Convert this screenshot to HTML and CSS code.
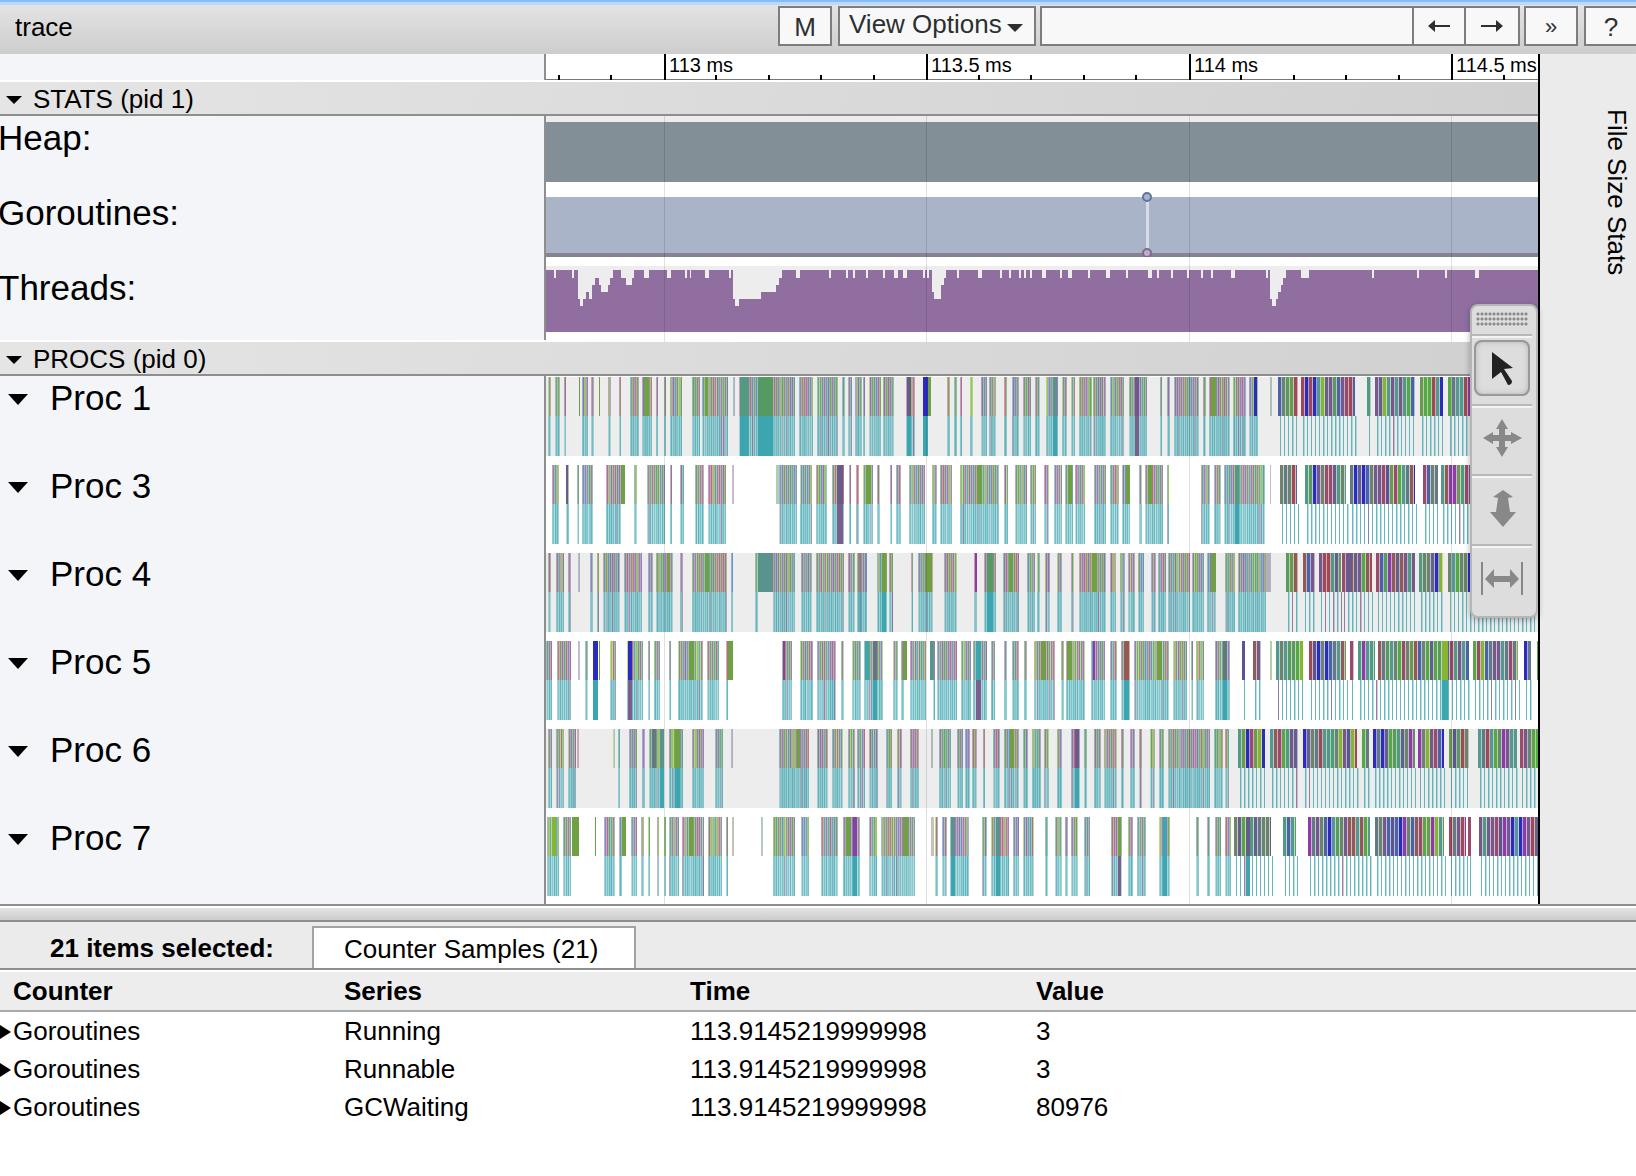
FILE: index.html
```html
<!DOCTYPE html>
<html lang="en">
<head>
<meta charset="utf-8">
<title>trace</title>
<link rel="stylesheet" href="styles.css">
</head>
<body>
<header class="toolbar">
  <h1 class="title">trace</h1>
  <button class="tool-btn" type="button">M</button>
  <button class="tool-btn options-btn" type="button">View Options<svg class="caret" width="16" height="8" viewBox="0 0 16 8" aria-hidden="true"><path d="M0 0H16L8 8Z"/></svg></button>
  <div class="find">
    <input class="find-input" type="text" aria-label="Find">
    <button class="find-btn" type="button" aria-label="Previous"><svg width="22" height="14" viewBox="0 0 22 14"><path d="M0 7L7 1V6H22V8H7V13Z"/></svg></button>
    <button class="find-btn" type="button" aria-label="Next"><svg width="22" height="14" viewBox="0 0 22 14"><path d="M22 7L15 1V6H0V8H15V13Z"/></svg></button>
  </div>
  <button class="tool-btn more-btn" type="button">»</button>
  <button class="tool-btn help-btn" type="button">?</button>
</header>

<main class="workspace">
  <section class="timeline">
    <div class="ruler">
      <div class="heading"></div>
      <svg class="scale" id="scale"></svg>
    </div>

    <h2 class="group"><svg class="caret" width="16" height="8" viewBox="0 0 16 8" aria-hidden="true"><path d="M0 0H16L8 8Z"/></svg>STATS (pid 1)</h2>
    <div class="track counter">
      <div class="heading"><span class="counter-name">Heap:</span></div>
      <svg class="lane shaded"><rect y="6" width="100%" height="60" fill="#828f96"/></svg>
    </div>
    <div class="track counter">
      <div class="heading"><span class="counter-name">Goroutines:</span></div>
      <svg class="lane">
        <rect y="6" width="100%" height="56" fill="#aab4c9"/>
        <rect y="62" width="100%" height="4" fill="#84838f"/>
        <rect x="600" y="10" width="3" height="49" fill="#d7dce8"/>
        <circle cx="601" cy="6" r="4" fill="#aab4c9" stroke="#5d74a0" stroke-width="2"/>
        <circle cx="601" cy="62" r="4" fill="#c0adc4" stroke="#84678f" stroke-width="2"/>
      </svg>
    </div>
    <div class="track counter last">
      <div class="heading"><span class="counter-name">Threads:</span></div>
      <svg class="lane shaded" id="threads"><rect y="4" width="100%" height="62" fill="#906fa0"/></svg>
    </div>

    <h2 class="group"><svg class="caret" width="16" height="8" viewBox="0 0 16 8" aria-hidden="true"><path d="M0 0H16L8 8Z"/></svg>PROCS (pid 0)</h2>
    <div id="procs"></div>

    <svg class="gridlines" id="gridlines" aria-hidden="true"></svg>

    <div class="palette">
      <div class="grip"></div>
      <button class="mode" type="button" aria-label="Select" aria-pressed="true"><svg width="56" height="56" viewBox="0 0 56 56"><path fill="#222" d="M18 12L39 28L30 29L38 41Q38 45 34 45L27 32L18 39Z"/></svg></button>
      <button class="mode" type="button" aria-label="Pan"><svg width="56" height="56" viewBox="0 0 56 56"><path fill="#888" d="M28 9L34 19H31V25H37V22L48 28L37 34V31H31V37H34L28 47L22 37H25V31H19V34L9 28L19 22V25H25V19H22Z"/></svg></button>
      <button class="mode" type="button" aria-label="Zoom"><svg width="56" height="56" viewBox="0 0 56 56"><path fill="#888" d="M29 10L39 17L34 18L36 32H42L29 47L16 32H22L24 18L19 17Z"/></svg></button>
      <button class="mode" type="button" aria-label="Timing"><svg width="56" height="56" viewBox="0 0 56 56"><path fill="#888" d="M7 12H9V45H7ZM47 12H49V45H47ZM11 29L20 19V26H36V19L45 29L36 38V32H20V38Z"/></svg></button>
    </div>
  </section>
  <aside class="side"><button class="side-tab" type="button">File Size Stats</button></aside>
</main>

<div class="drag-handle"></div>

<section class="analysis">
  <div class="tabs">
    <strong class="selected-count">21 items selected:</strong>
    <button class="tab" type="button">Counter Samples (21)</button>
  </div>
  <table class="samples">
    <colgroup><col class="col-counter"><col class="col-mid"><col class="col-mid"><col></colgroup>
    <thead>
      <tr><th>Counter</th><th>Series</th><th>Time</th><th>Value</th></tr>
    </thead>
    <tbody>
      <tr><td class="expand">Goroutines</td><td>Running</td><td>113.9145219999998</td><td>3</td></tr>
      <tr><td class="expand">Goroutines</td><td>Runnable</td><td>113.9145219999998</td><td>3</td></tr>
      <tr><td class="expand">Goroutines</td><td>GCWaiting</td><td>113.9145219999998</td><td>80976</td></tr>
    </tbody>
  </table>
</section>
<script src="trace.js"></script>
</body>
</html>
```

FILE: styles.css
```css
* { box-sizing: border-box; }

body {
  margin: 0;
  background: #fff;
  color: #000;
  font: 26px/32px "Liberation Sans", Arial, sans-serif;
  overflow-x: hidden;
}

button, input { font: inherit; color: inherit; margin: 0; }
h1, h2 { margin: 0; font: inherit; }

/* Toolbar */
.toolbar {
  display: flex;
  align-items: flex-start;
  height: 54px;
  padding-top: 6px;
  background: linear-gradient(#86bcfb 2px, #bcd8fa 2px, #bcd8fa 5px, #e3e3e3 5px, #cdcdcd);
}
.title { flex: 1; padding: 5px 0 0 15px; }
.tool-btn, .find {
  height: 40px;
  border: 2px solid #7d7d7d;
  background: #f8f8f8;
  color: #2c2f30;
}
.tool-btn { width: 54px; padding: 1px 0 0; line-height: 32px; text-align: center; }
.options-btn {
  display: flex;
  width: 198px;
  margin: 0 4px 0 6px;
  padding: 0 0 0 9px;
}
.options-btn .caret { margin: 16px 0 0 5px; fill: #2c2f30; }
.find { display: flex; width: 480px; }
.find-input { flex: 1; min-width: 0; padding: 0 8px; border: 0; background: none; }
.find-btn {
  width: 52px;
  padding: 0;
  border: 0;
  border-left: 2px solid #7d7d7d;
  background: none;
  line-height: 0;
}
.find-btn:last-child { width: 54px; }
.find-btn svg { fill: #2c2f30; }
.more-btn { margin: 0 6px 0 4px; font-size: 22px; }
.help-btn { margin-right: -2px; flex: none; }

/* Timeline */
.workspace { display: flex; }
.timeline { position: relative; flex: 1; min-width: 0; }
.ruler, .track { display: flex; }
.ruler { height: 28px; border-bottom: 2px solid #fff; }
.heading {
  flex: none;
  width: 546px;
  border-right: 2px solid #8e8e8e;
  background: #f3f5f8;
}
.scale { flex: 1; min-width: 0; height: 26px; font-size: 20px; }
.group {
  display: flex;
  position: relative;
  z-index: 1;
  height: 34px;
  border-bottom: 2px solid #8e8e8e;
  background: linear-gradient(100deg, #e5e5e5, #d0d0d0);
  line-height: 34px;
}
.group .caret { margin: 14px 11px 0 6px; }
.counter { height: 75px; }
.counter.last { height: 76px; border-bottom: 2px solid #fff; }
.counter-name, .proc-name { font-size: 35px; line-height: 44px; }
.counter-name { margin-left: -2px; }
.lane { flex: 1; min-width: 0; height: 66px; overflow: hidden; }
.shaded { background: #ededed; }
.proc { height: 88px; }
.proc .heading { display: flex; }
.proc .caret { margin: 18px 22px 0 8px; }
.proc .lane { height: 79px; margin-top: 1px; }
.gridlines {
  position: absolute;
  top: 28px;
  left: 546px;
  right: 0;
  width: calc(100% - 546px);
  height: calc(100% - 28px);
  pointer-events: none;
}
.side { width: 98px; border-left: 2px solid #000; background: #ebebeb; }
.side-tab {
  display: block;
  margin: 55px 0 0 59px;
  padding: 0;
  border: 0;
  background: none;
  line-height: 36px;
  writing-mode: vertical-rl;
}

/* Floating mouse-mode palette */
.palette {
  position: absolute;
  z-index: 2;
  top: 250px;
  right: 0;
  width: 68px;
  height: 314px;
  border: 2px solid #b6b6b6;
  border-radius: 8px;
  background: #ddd;
  box-shadow: 0 2px 6px rgba(0, 0, 0, .3);
}
.grip {
  height: 14px;
  margin: 6px 8px 8px 4px;
  background: radial-gradient(circle at 2px 2px, #8a8a8a 1px, transparent 2px) 0 0 / 4px 5px;
}
.mode {
  display: block;
  width: 60px;
  height: 70px;
  padding: 4px 0 8px 2px;
  border: 0;
  border-top: 2px solid #b8b8b8;
  background: none;
  box-shadow: inset 0 2px #f4f4f4;
}
.mode svg { display: block; border-radius: 8px; }
.mode[aria-pressed="true"] svg { box-shadow: inset 0 0 0 2px #999, inset 0 0 7px #999; }

/* Analysis panel */
.drag-handle {
  height: 18px;
  border-top: 2px solid #8e8e8e;
  border-bottom: 2px solid #8e8e8e;
  background: linear-gradient(#fff 2px, #e3e3e3 2px, #cdcdcd);
}
.tabs {
  display: flex;
  align-items: flex-end;
  height: 48px;
  border-bottom: 2px solid #8e8e8e;
  background: #ebebeb;
}
.selected-count { width: 312px; padding: 0 0 4px 50px; }
.tab {
  min-width: 324px;
  height: 42px;
  padding: 2px 32px 0 30px;
  border: 2px solid #a2a2a2;
  border-bottom: 0;
  background: #fff;
  text-align: left;
}
.samples { width: 100%; border-collapse: collapse; table-layout: fixed; }
.col-counter { width: 344px; }
.col-mid { width: 346px; }
.samples th, .samples td { height: 38px; padding: 0; line-height: 38px; text-align: left; }
.samples th { border-top: 2px solid #fff; border-bottom: 2px solid #aaa; background: #ededed; }
.samples th:first-child { padding-left: 13px; }
.expand::before {
  content: "";
  display: inline-block;
  margin-right: 2px;
  border-left: 11px solid #000;
  border-top: 7px solid transparent;
  border-bottom: 7px solid transparent;
  vertical-align: 1px;
}
```

FILE: trace.js
```js
const NS = "http://www.w3.org/2000/svg";

function add(parent, tag, attrs, text) {
  const node = document.createElementNS(NS, tag);
  for (const key in attrs) node.setAttribute(key, attrs[key]);
  if (text) node.textContent = text;
  parent.appendChild(node);
  return node;
}

// Ruler and grid: one major division is 0.5 ms
const MAJORS = [[118, "113 ms"], [380, "113.5 ms"], [643, "114 ms"], [905, "114.5 ms"]];
const scale = document.getElementById("scale");
const grid = document.getElementById("gridlines");
add(scale, "rect", { y: 25, width: "100%", height: 1, fill: "#777" });
for (let i = -2; i < 18; i++) {
  if (i % 5) add(scale, "rect", { x: Math.floor(117 + i * 52.5), y: 21, width: 2, height: 5 });
}
for (const [x, label] of MAJORS) {
  add(scale, "rect", { x: x, y: 0, width: 2, height: 26 });
  add(scale, "text", { x: x + 5, y: 18 }, label);
  add(grid, "rect", { x: x, y: 0, width: 1, height: "100%", fill: "#000", "fill-opacity": 0.12 });
}

// Thread counter dips: offset+width:depth, depth 8 when left out
const DIPS = "8+2 26+2 32+2:29 34+3:36 37+3:29 40+4:22 43+3:29 46+3:15 49+4:8 53+2:15 55+7:22 62+2:15 64+3:8 75+5 80+6:15 86+2 98+5 121+4 139+2 144+1 159+4 183+2 187+2:29 189+4:36 193+22:29 215+15:22 230+3:15 233+3 250+4 283+2 300+2 307+2 320+2 337+2 348+4 357+4 377+2 381+2 386+2:22 388+7:29 395+3:15 398+2 411+2 432+4 454+2 463+2 473+2 478+2 484+2 496+4 514+2 522+4 542+2 560+4 580+2 602+4 611+2 625+2 641+2 655+2 665+2 685+4 720+2 724+2:29 726+4:36 730+2:29 732+3:22 735+2:15 737+3 755+8 826+2 871+2 899+2 929+4";
const threads = document.getElementById("threads");
for (const dip of DIPS.split(" ")) {
  const [, x, w, d] = dip.match(/(\d+)\+(\d+):?(\d*)/);
  add(threads, "rect", { x: x, y: 4, width: w, height: d || 8, fill: "#ededed" });
}

// Slices: offset+width, then the kind of the upper row (m mixed by default,
// d dense, or a colour letter) and of the row below (T teal, P purple, - none)
const PROCS = {
  "Proc 1": "2+3 9+5 18+2 33+1g 36+6 45+3 53+1g 62+3 73+2 84+9 96+10 98+5g 110+2 118+2 124+12 146+8 156+26 159+3g 187+2m- 193+56 194+9ET 212+15GT 253+14 271+21 296+3 302+4 309+7 317+2 323+12 337+11 360+9 361+4pT 377+5bT 382+3g 401+3 408+3 414+2 424+3 435+6 443+7 458+3 466+7 477+8 489+5 500+12 507+4eT 516+5 525+4 533+13 547+13 564+14 583+18 589+4pP 614+2 621+3 628+25 657+3 663+21 665+5g 687+13 703+9 708+3b 724+2m- 732+20d 755+54d 821+4d 829+40d 874+23d 902+80d",
  "Proc 3": "6+7 20+3 20+2p 31+2 36+11 60+15 75+4g 88+3 101+18 124+2 134+4 149+9 162+18 186+2m- 230+3m- 233+18 254+12 270+11 286+12 291+6pP 303+2 310+3 317+10 320+5g 331+3 344+2 350+5 363+16 386+5 394+12 414+39 431+5g 458+4 469+12 484+6 498+5 508+8 519+8 522+4g 529+10 548+12 564+9 576+8 580+4g 593+3 599+18 602+4g 621+2 655+9 668+7 678+41 689+4ET 724+1m- 734+17d 759+41d 804+65d 877+15d 895+90d",
  "Proc 4": "2+3 10+8 22+3 32+2m- 44+3 51+2 57+17 78+18 102+5 110+17 121+3g 134+3 146+35 159+4g 185+2 209+3 212+15e 227+22 255+11 270+28 302+7 311+4 319+2 312+8 331+10 336+4gT 343+4 365+2 372+15 380+6g 398+13 428+3 429+2v 438+12 441+6GT 457+16 463+4g 481+8 491+3 499+5 511+5 525+3 533+27 546+5g 564+6 574+5 582+7 592+6 605+5 612+8 622+22 646+12 661+9 665+5g 679+10 692+28 719+6m- 740+12d 757+12d 773+22d 796+30d 800+6p 830+39d 873+24d 902+90d",
  "Proc 5": "0+6 11+14 32+2m- 39+3 47+5bT 53+1g 64+6 81+16 82+4bP 102+2 108+6 123+2 132+25 143+5g 161+12 180+2 182+5g 236+10 237+2v 254+13 271+19 295+3 306+9 318+19 319+4t 327+4sT 347+5 355+3 357+4g 364+16 384+4e 387+2 391+20 415+10 427+14 430+5tP 445+4 458+3 466+7 478+3 488+21 495+5g 515+3 520+19 521+5g 545+14 547+2v 564+7 575+9 578+5rT 588+35 611+5g 627+14 645+2 650+8 669+15 677+4sT 696+3d 707+8d 724+2m- 730+27d 763+37d 804+4d 812+17d 832+91d 896+6yT 927+45d 978+7d 991+2d",
  "Proc 6": "2+4 10+8 22+8 31+2m- 67+2m- 72+2 83+8 96+3 103+15 106+4s 114+4eT 123+14 129+5gT 146+12 169+8 185+2m- 233+30 251+3g 271+11 286+11 302+7 311+8 323+9 340+6 351+5 364+9 385+2m- 393+12 411+6 419+5 426+5 437+2 447+7 458+15 464+4g 477+5 486+9 498+5 511+5 525+9 529+4pT 538+3 548+7 558+13 575+3 584+5 593+3 604+5 613+5 622+42 668+9 679+4 692+27d 724+28d 757+54d 816+7d 827+42d 872+26d 903+20d 932+39d 974+20d",
  "Proc 7": "1+12 6+4y 17+8 26+7g 49+1g 58+11 73+3 76+4g 85+6 95+3 102+2 111+2 118+2 123+10 136+22 143+4g 162+14 180+2 186+2m- 215+2m- 227+22 255+8 275+17 297+17 300+4g 307+4vT 323+8 335+34 357+5g 385+3m- 389+3 396+5 404+19 405+4eT 436+5 445+18 450+4eT 467+6 477+11 499+3 509+7 519+3 525+7 538+6 565+11 572+3gP 582+5 591+9 613+11 617+4tT 650+3 661+3 669+6 679+6 688+37d 700+4pT 737+13d 762+62d 829+69d 903+17d 922+3d 933+59d"
};
const SOLID = { g: "#6fa043", G: "#559a63", E: "#549982", e: "#5a938e", t: "#3da5af", b: "#2b2bc0", p: "#6a5a8c", v: "#8c3ca5", s: "#66757f", r: "#945a52", y: "#86b532" };
const MIXED = ["#6fa043", "#559a63", "#a8607a", "#8577ad", "#58a298", "#6d8a7a", "#a26aae", "#8fbf4a", "#5f86c0", "#7f6a99", "#a9776f", "#6b9c86"];
const DENSE = ["#75588c", "#5a9a5f", "#55988f", "#8f5a58", "#6a846e", "#8c3ca5", "#4a62a8", "#9a4a6a", "#55a843", "#637a86", "#5a5590", "#6d9850", "#75588c", "#86b532", "#a04858", "#63608c", "#4f9a80", "#55988f", "#6a846e", "#2b2bc0"];
const TEAL = "#3da5af", PURPLE = "#7a5f8c";
const UPPER = 39, LOWER = 40;

let seed = 7;
function random() {
  seed = (seed * 1103515245 + 12345) % 2147483648;
  return seed / 2147483648;
}
function pick(list) { return list[Math.floor(random() * list.length)]; }

function bar(lane, x, w, below, fill, opacity) {
  add(lane, "rect", { x: x, y: below ? UPPER : 0, width: w, height: below ? LOWER : UPPER, fill: fill, "fill-opacity": opacity || 1 });
}

function drawSlices(lane, slices) {
  for (const slice of slices.split(" ")) {
    const [, sx, sw, top, bottom] = slice.match(/(\d+)\+(\d+)([a-zA-Z]?)([TP-]?)/);
    const x = +sx, w = +sw;
    if (top === "d") {
      for (let i = 0; i < w; i += 4) {
        const color = pick(DENSE);
        bar(lane, x + i, Math.min(3, w - i), false, color);
        if (i + 3 < w) bar(lane, x + i + 3, 1, false, color, 0.4);
        const stem = random() < 0.06 ? PURPLE : TEAL;
        bar(lane, x + i + 2, 1, true, stem, 0.8);
        if (random() < 0.5) bar(lane, x + i + 3, 1, true, stem, 0.35);
      }
    } else if (top && top !== "m") {
      bar(lane, x, w, false, SOLID[top]);
      if (bottom) bar(lane, x, w, true, bottom === "T" ? TEAL : PURPLE);
    } else {
      for (let i = 0; i < w; i++) {
        bar(lane, x + i, 1, false, pick(MIXED), bottom ? 0.5 : (i % 2 ? 0.9 : 0.6));
        if (!bottom) bar(lane, x + i, 1, true, random() < 0.05 ? PURPLE : TEAL, (i % 2 ? 0.6 : 0.35) + random() * 0.25);
      }
    }
  }
}

const procs = document.getElementById("procs");
Object.keys(PROCS).forEach((name, index) => {
  const track = document.createElement("div");
  track.className = "track proc";
  track.innerHTML = '<div class="heading"><svg class="caret" width="20" height="11" viewBox="0 0 20 11"><path d="M0 0H20L10 11Z"/></svg><span class="proc-name"></span></div>';
  track.querySelector(".proc-name").textContent = name;
  const lane = add(track, "svg", { class: index % 2 ? "lane" : "lane shaded", "shape-rendering": "crispEdges" });
  drawSlices(lane, PROCS[name]);
  procs.appendChild(track);
});
```
